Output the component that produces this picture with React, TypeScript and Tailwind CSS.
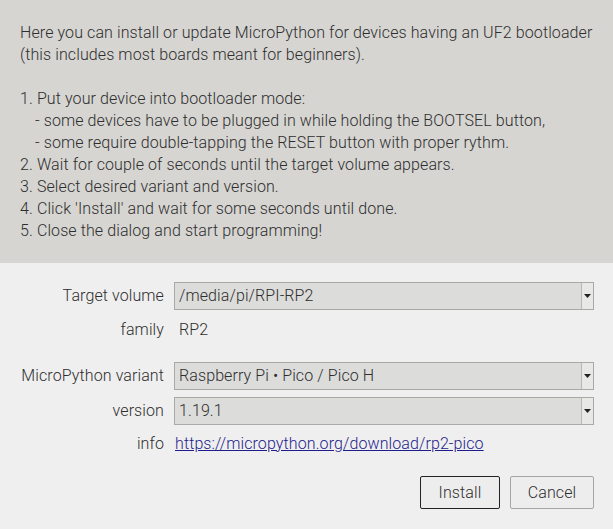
import React from "react";

const Combo = ({ value }: { value: string }) => (
  <div className="flex h-[28px] flex-1 items-stretch border border-[#a9a9a7] bg-[#dcdcda]">
    <div className="flex flex-1 items-center px-[4px]">{value}</div>
    <div className="flex w-[12px] items-center justify-center border-l border-[#b8b8b6] bg-[#e8e8e6]">
      <svg width="7" height="4" viewBox="0 0 7 4">
        <path d="M0 0h7L3.5 4z" fill="#222" />
      </svg>
    </div>
  </div>
);

const Label = ({ children }: { children: React.ReactNode }) => (
  <div className="w-[154px] shrink-0 pr-[10px] text-right">{children}</div>
);

export default function App() {
  return (
    <div
      className="flex h-[529px] w-[613px] flex-col bg-[#efefef] text-[16px] tracking-[0.1px] text-[#2e2e2e]"
      style={{ fontFamily: "Roboto, 'Noto Sans', sans-serif", fontWeight: 300 }}
    >
      <div className="bg-[#d6d5d2] pl-[20px] pr-[10px] pt-[22px] pb-[21px] leading-[22px]">
        <p>Here you can install or update MicroPython for devices having an UF2 bootloader</p>
        <p>(this includes most boards meant for beginners).</p>
        <p>&nbsp;</p>
        <p>1. Put your device into bootloader mode:</p>
        <p className="pl-[15px]">- some devices have to be plugged in while holding the BOOTSEL button,</p>
        <p className="pl-[15px]">- some require double-tapping the RESET button with proper rythm.</p>
        <p>2. Wait for couple of seconds until the target volume appears.</p>
        <p>3. Select desired variant and version.</p>
        <p>4. Click 'Install' and wait for some seconds until done.</p>
        <p>5. Close the dialog and start programming!</p>
      </div>

      <div className="flex flex-col pl-[20px] pr-[19px] pt-[19px]">
        <div className="flex items-center">
          <Label>Target volume</Label>
          <Combo value="/media/pi/RPI-RP2" />
        </div>
        <div className="mt-[6px] flex h-[28px] items-center">
          <Label>family</Label>
          <div className="pl-[5px]">RP2</div>
        </div>
        <div className="mt-[18px] flex items-center">
          <Label>MicroPython variant</Label>
          <Combo value="Raspberry Pi • Pico / Pico H" />
        </div>
        <div className="mt-[7px] flex items-center">
          <Label>version</Label>
          <Combo value="1.19.1" />
        </div>
        <div className="mt-[5px] flex h-[28px] items-center">
          <Label>info</Label>
          <a className="pl-[1px] text-[#1f1d8c] underline">https://micropython.org/download/rp2-pico</a>
        </div>
        <div className="mt-[18px] flex justify-end gap-[10px]">
          <button className="h-[33px] w-[80px] rounded-[2px] border border-[#222] bg-[#ededed]">Install</button>
          <button className="h-[33px] w-[84px] rounded-[2px] border border-[#a5a5a5] bg-[#ededed]">Cancel</button>
        </div>
      </div>
    </div>
  );
}
